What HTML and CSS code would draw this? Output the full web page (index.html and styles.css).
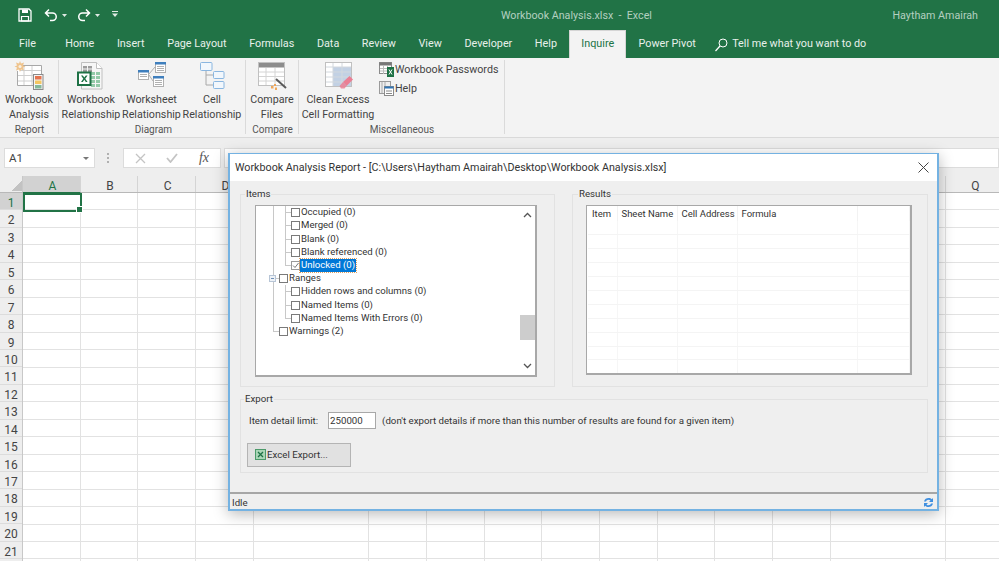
FILE: index.html
```html
<!DOCTYPE html>
<html lang="en">
<head>
<meta charset="utf-8">
<title>Workbook Analysis.xlsx - Excel</title>
<link rel="stylesheet" href="styles.css">
</head>
<body>
<div class="app">
  <header class="titlebar">
    <div class="qat">
      <svg class="qat-save" width="14" height="14" viewBox="0 0 14 14"><path d="M1 1h10l2 2v10H1z" fill="none" stroke="#fff" stroke-width="1.3"/><path d="M4 1.500h6v3.500H4z" fill="#fff"/><path d="M3.500 8.500h7V13h-7z" fill="none" stroke="#fff" stroke-width="1.2"/></svg>
      <svg class="qat-undo" width="14" height="14" viewBox="0 0 14 14"><path d="M5 1.500L1.500 5 5 8.500M2 5h6.500a3.700 3.700 0 0 1 0 7.500H6" fill="none" stroke="#fff" stroke-width="1.5"/></svg>
      <svg class="qat-caret" width="5" height="3" viewBox="0 0 5 3"><path d="M0 0h5L2.500 3z" fill="#dfe9e3"/></svg>
      <svg class="qat-redo" width="14" height="14" viewBox="0 0 14 14"><path d="M9 1.500L12.500 5 9 8.500M12 5H5.500a3.700 3.700 0 0 0 0 7.500H8" fill="none" stroke="#fff" stroke-width="1.5"/></svg>
      <svg class="qat-caret" width="5" height="3" viewBox="0 0 5 3"><path d="M0 0h5L2.500 3z" fill="#dfe9e3"/></svg>
      <svg class="qat-more" width="6" height="6" viewBox="0 0 6 6"><path d="M0 0h6v1H0zM0 2.500h6L3 6z" fill="#dfe9e3"/></svg>
    </div>
    <div class="doc-title">Workbook Analysis.xlsx&nbsp; -&nbsp; Excel</div>
    <div class="user">Haytham Amairah</div>
  </header>
  <nav class="tabs">
    <span class="tab tab-file">File</span>
    <span class="tab">Home</span>
    <span class="tab">Insert</span>
    <span class="tab">Page Layout</span>
    <span class="tab">Formulas</span>
    <span class="tab">Data</span>
    <span class="tab">Review</span>
    <span class="tab">View</span>
    <span class="tab">Developer</span>
    <span class="tab">Help</span>
    <span class="tab tab-active">Inquire</span>
    <span class="tab">Power Pivot</span>
    <span class="tellme">
      <svg width="13" height="14" viewBox="0 0 13 14"><circle cx="8" cy="5" r="4" fill="none" stroke="#fff" stroke-width="1"/><path d="M5 8l-4.500 5" stroke="#fff" stroke-width="1.200"/></svg>
      Tell me what you want to do
    </span>
  </nav>
  <section class="ribbon">
    <div class="group group-report">
      <div class="group-items">
        <div class="rbtn">
          <svg class="ricon" width="30" height="30" viewBox="0 0 30 30">
            <path d="M6 4.500h21.500v20H3.500V10" fill="#fff" stroke="#a8a8a8"/><path d="M4 14.500h23M4 20h23M10 5v19M18 5v19M6 9.500h21" stroke="#cfcfcf" fill="none"/>
            <path d="M6 0l1 2.500 3-1-1 3 2.500 1-2.500 1 1 3-3-1-1 2.500-1-2.500-3 1 1-3L.5 5.500l2.500-1-1-3 3 1z" fill="#efc48e"/><circle cx="6" cy="5.500" r="1.500" fill="#f7f0e4"/>
            <rect x="19.500" y="13.500" width="9.500" height="15" fill="#f4f4f4" stroke="#8a8a8a"/><rect x="21" y="15" width="6.500" height="3.500" fill="#e5744f"/><rect x="21" y="19.500" width="6.500" height="3.500" fill="#f4c660"/><rect x="21" y="24" width="6.500" height="3.500" fill="#84b899"/>
          </svg>
          <span class="rlabel">Workbook<br>Analysis</span>
        </div>
      </div>
      <div class="group-name">Report</div>
    </div>
    <div class="group group-diagram">
      <div class="group-items">
        <div class="rbtn rbtn-wide">
          <svg class="ricon" width="30" height="30" viewBox="0 0 30 30">
            <path d="M5.500 1.500h15l5.500 6v20.500H5.500z" fill="#f6f6f6" stroke="#c0c0c0"/><path d="M20.500 1.500v6H26" fill="#fff" stroke="#c0c0c0"/>
            <path d="M7 5h4v2.500H7zM12 5h4v2.500h-4zM7 8.500h4V11H7zM12 8.500h4V11h-4z" fill="#9c9c9c"/>
            <path d="M15 11h4v3h-4zM20 11h4v3h-4zM15 15h4v3h-4zM20 15h4v3h-4zM15 19h4v3h-4zM20 19h4v3h-4zM15 23h4v3h-4zM20 23h4v3h-4z" fill="#93caa8"/>
            <rect x="2" y="11.500" width="12.500" height="12.500" fill="#fff" stroke="#1e7145" stroke-width="2"/>
            <path d="M5 14.500l2.300 3.200L5 21h1.800l1.500-2.200L9.800 21h1.800l-2.300-3.300 2.300-3.200H9.800l-1.500 2.100-1.500-2.100z" fill="#1e7145"/>
          </svg>
          <span class="rlabel">Workbook<br>Relationship</span>
        </div>
        <div class="rbtn rbtn-wide">
          <svg class="ricon" width="30" height="30" viewBox="0 0 30 30">
            <path d="M12 13l6-7M12 14l4 6" stroke="#b0b0b0" fill="none"/>
            <rect x="1.500" y="9.500" width="10" height="9" fill="#fff" stroke="#b0b0b0"/><rect x="1" y="9" width="11" height="2.500" fill="#3f7fbd"/><path d="M3 13.500h7M3 15.500h7" stroke="#b0b0b0"/>
            <rect x="18.500" y="1.500" width="10" height="10" fill="#fff" stroke="#b0b0b0"/><rect x="18" y="1" width="11" height="2.500" fill="#3f7fbd"/><path d="M20 5.500h7M20 7.500h7M20 9.500h7" stroke="#b0b0b0"/>
            <rect x="16.500" y="15.500" width="10" height="10" fill="#fff" stroke="#b0b0b0"/><rect x="16" y="15" width="11" height="2.500" fill="#3f7fbd"/><path d="M18 19.500h7M18 21.500h7M18 23.500h7" stroke="#b0b0b0"/>
          </svg>
          <span class="rlabel">Worksheet<br>Relationship</span>
        </div>
        <div class="rbtn rbtn-wide">
          <svg class="ricon" width="30" height="30" viewBox="0 0 30 30">
            <path d="M9 9v15h7M9 14h7" fill="none" stroke="#a8a8a8"/>
            <rect x="3.500" y="1.500" width="11.500" height="8" rx="1" fill="#f2f7fc" stroke="#8ab6e0"/>
            <rect x="16.500" y="10.500" width="10.500" height="7" rx="1" fill="#f2f7fc" stroke="#8ab6e0"/>
            <rect x="16.500" y="20.500" width="10.500" height="7" rx="1" fill="#f2f7fc" stroke="#8ab6e0"/>
          </svg>
          <span class="rlabel">Cell<br>Relationship</span>
        </div>
      </div>
      <div class="group-name">Diagram</div>
    </div>
    <div class="group group-compare">
      <div class="group-items">
        <div class="rbtn">
          <svg class="ricon" width="30" height="30" viewBox="0 0 30 30">
            <rect x="1.500" y="1.500" width="26" height="23" fill="#fff" stroke="#c0c0c0"/><rect x="2" y="2" width="25" height="4.500" fill="#8c8c8c"/>
            <path d="M2 11h25M2 15.500h25M2 20h25M9 7v17M18 7v17" stroke="#d4d4d4"/>
            <path d="M19 18l10 9" stroke="#5a5a5a" stroke-width="2"/><path d="M17 23h2v2h-2zM14 25h2.500v2.500H14zM18 26.500h2V29h-2z" fill="#f0a75a"/>
          </svg>
          <span class="rlabel">Compare<br>Files</span>
        </div>
      </div>
      <div class="group-name">Compare</div>
    </div>
    <div class="group group-misc">
      <div class="group-items">
        <div class="rbtn rbtn-clean">
          <svg class="ricon" width="30" height="30" viewBox="0 0 30 30">
            <rect x="2.500" y="1.500" width="26" height="24" fill="#fff" stroke="#c0c0c0"/><rect x="10" y="6" width="18" height="19" fill="#c2d1e4"/>
            <path d="M3 6h25M3 11h25M3 16h25M3 21h25M10 2v23M19 2v23" stroke="#d2d8de"/>
            <path d="M20 21l6.500-6 3.500 3.500-6.500 6.500z" fill="#ea7f94"/><path d="M20 21l3.500 4-2 2.500H18L16.500 25z" fill="#ea7f94" opacity=".85"/>
          </svg>
          <span class="rlabel">Clean Excess<br>Cell Formatting</span>
        </div>
        <div class="rsmall-list">
          <div class="rsmall">
            <svg width="15" height="15" viewBox="0 0 15 15"><rect x=".5" y=".5" width="12" height="11" fill="#fff" stroke="#8a8a8a"/><rect x=".5" y=".5" width="12" height="3" fill="#777"/><path d="M1 6.500h11M1 9h11M4.500 4v8M8.500 4v8" stroke="#bbb"/><rect x="8" y="5" width="7" height="10" fill="#1e7145"/><path d="M10 7.500l3 5M13 7.500l-3 5" stroke="#fff"/></svg>
            <span>Workbook Passwords</span>
          </div>
          <div class="rsmall">
            <svg width="15" height="15" viewBox="0 0 15 15"><rect x=".5" y=".5" width="11" height="12" fill="#eee" stroke="#9a9a9a"/><path d="M3 1v11M6 1v5" stroke="#aaa"/><rect x="5.500" y="5.500" width="9" height="9" fill="#fff" stroke="#8a8a8a"/><rect x="5.500" y="5.500" width="9" height="2" fill="#2f75b5"/><path d="M7 10h6M7 12.500h6" stroke="#888"/></svg>
            <span>Help</span>
          </div>
        </div>
      </div>
      <div class="group-name">Miscellaneous</div>
    </div>
  </section>
  <section class="formula-bar">
    <div class="namebox"><span>A1</span><svg width="6" height="3" viewBox="0 0 6 3"><path d="M0 0h6L3 3z" fill="#777"/></svg></div>
    <div class="fb-dots"></div>
    <div class="fb-buttons">
      <svg width="11" height="11" viewBox="0 0 11 11"><path d="M1 1l9 9M10 1l-9 9" stroke="#c4c4c4" stroke-width="1.300"/></svg>
      <svg width="12" height="10" viewBox="0 0 12 10"><path d="M1 5l3.500 4L11 1" fill="none" stroke="#c4c4c4" stroke-width="1.800"/></svg>
      <span class="fx">fx</span>
    </div>
    <div class="fb-input"></div>
  </section>
  <section class="sheet">
    <div class="col-heads">
      <div class="corner"></div>
      <span class="col col-on">A</span><span class="col">B</span><span class="col">C</span><span class="col">D</span><span class="col">E</span><span class="col">F</span><span class="col">G</span><span class="col">H</span><span class="col">I</span><span class="col">J</span><span class="col">K</span><span class="col">L</span><span class="col">M</span><span class="col">N</span><span class="col">O</span><span class="col">P</span><span class="col">Q</span>
    </div>
    <div class="sheet-body">
      <div class="row-heads">
        <span class="rowh rowh-on">1</span><span class="rowh">2</span><span class="rowh">3</span><span class="rowh">4</span><span class="rowh">5</span><span class="rowh">6</span><span class="rowh">7</span><span class="rowh">8</span><span class="rowh">9</span><span class="rowh">10</span><span class="rowh">11</span><span class="rowh">12</span><span class="rowh">13</span><span class="rowh">14</span><span class="rowh">15</span><span class="rowh">16</span><span class="rowh">17</span><span class="rowh">18</span><span class="rowh">19</span><span class="rowh">20</span><span class="rowh">21</span>
      </div>
      <div class="cells"><div class="active-cell"></div></div>
    </div>
  </section>
</div>

<div class="dialog">
  <div class="dlg-title">
    <span>Workbook Analysis Report - [C:\Users\Haytham Amairah\Desktop\Workbook Analysis.xlsx]</span>
    <svg width="11" height="11" viewBox="0 0 11 11"><path d="M.5.500l10 10M10.500.500l-10 10" stroke="#444" stroke-width="1"/></svg>
  </div>
  <div class="dlg-main">
    <div class="dlg-panels">
      <fieldset class="panel panel-items">
        <legend>Items</legend>
        <div class="tree">
          <div class="tree-rows">
            <div class="node n2 line"><i class="cb"></i><span>Occupied (0)</span></div>
            <div class="node n2 line"><i class="cb"></i><span>Merged (0)</span></div>
            <div class="node n2 line"><i class="cb"></i><span>Blank (0)</span></div>
            <div class="node n2 line"><i class="cb"></i><span>Blank referenced (0)</span></div>
            <div class="node n2 line-end"><i class="cb cb-on"><svg width="7" height="7" viewBox="0 0 7 7"><path d="M1 3.500l2 2L6.500 1" fill="none" stroke="#777" stroke-width="1"/></svg></i><span class="sel">Unlocked (0)</span></div>
            <div class="node n1 branch"><i class="minus"></i><i class="cb"></i><span>Ranges</span></div>
            <div class="node n2 line"><i class="cb"></i><span>Hidden rows and columns (0)</span></div>
            <div class="node n2 line"><i class="cb"></i><span>Named Items (0)</span></div>
            <div class="node n2 line-end"><i class="cb"></i><span>Named Items With Errors (0)</span></div>
            <div class="node n1 last"><i class="cb"></i><span>Warnings (2)</span></div>
          </div>
          <div class="vscroll">
            <svg width="9" height="6" viewBox="0 0 9 6"><path d="M1 5l3.500-3.500L8 5" fill="none" stroke="#555" stroke-width="1.300"/></svg>
            <div class="vtrack"><div class="vthumb"></div></div>
            <svg width="9" height="6" viewBox="0 0 9 6"><path d="M1 1l3.500 3.500L8 1" fill="none" stroke="#555" stroke-width="1.300"/></svg>
          </div>
        </div>
      </fieldset>
      <fieldset class="panel panel-results">
        <legend>Results</legend>
        <div class="results">
          <table>
            <thead><tr><th class="c1">Item</th><th class="c2">Sheet Name</th><th class="c3">Cell Address</th><th class="c4">Formula</th><th></th></tr></thead>
            <tbody>
              <tr><td></td><td></td><td></td><td></td><td></td></tr>
              <tr><td></td><td></td><td></td><td></td><td></td></tr>
              <tr><td></td><td></td><td></td><td></td><td></td></tr>
              <tr><td></td><td></td><td></td><td></td><td></td></tr>
              <tr><td></td><td></td><td></td><td></td><td></td></tr>
              <tr><td></td><td></td><td></td><td></td><td></td></tr>
              <tr><td></td><td></td><td></td><td></td><td></td></tr>
              <tr><td></td><td></td><td></td><td></td><td></td></tr>
              <tr><td></td><td></td><td></td><td></td><td></td></tr>
              <tr><td></td><td></td><td></td><td></td><td></td></tr>
              <tr><td></td><td></td><td></td><td></td><td></td></tr>
            </tbody>
          </table>
        </div>
      </fieldset>
    </div>
    <fieldset class="panel panel-export">
      <legend>Export</legend>
      <div class="export-row">
        <label for="limit">Item detail limit:</label>
        <input id="limit" type="text" value="250000">
        <span>(don't export details if more than this number of results are found for a given item)</span>
      </div>
      <button type="button" class="export-btn">
        <svg width="11" height="11" viewBox="0 0 11 11"><rect x=".5" y=".5" width="10" height="10" fill="#a9d5b6" stroke="#4c9a6a"/><path d="M3 3l5 5M8 3l-5 5" stroke="#1e7145" stroke-width="1.300"/></svg>
        <span>Excel Export...</span>
      </button>
    </fieldset>
  </div>
  <div class="dlg-status">
    <span>Idle</span>
    <svg width="11" height="11" viewBox="0 0 11 11"><path d="M1 4.500C1.500 2 3.500 1 5.500 1c1.500 0 2.500.5 3.300 1.300L10 1v4H6l1.500-1.400C7 3 6.300 2.800 5.500 2.800 4.300 2.800 3.300 3.500 3 4.500z" fill="#3f8fe0"/><path d="M10 6.500C9.500 9 7.500 10 5.500 10c-1.500 0-2.500-.5-3.300-1.300L1 10V6h4L3.500 7.400c.5.600 1.200.8 2 .8 1.200 0 2.200-.7 2.500-1.700z" fill="#3f8fe0"/></svg>
  </div>
</div>
</body>
</html>
```
FILE: styles.css
```css
* { box-sizing: border-box; }
html, body { margin: 0; height: 100%; overflow: hidden; }
body { font-family: Roboto, "Noto Sans", sans-serif; background: #fff; color: #444; width: 999px; height: 561px; position: relative; }
.app { width: 999px; height: 561px; display: flex; flex-direction: column; overflow: hidden; }

/* title bar */
.titlebar { height: 30px; background: #217346; display: flex; align-items: center; color: #b4d0c0; font-size: 10.700px; flex: none; }
.qat { display: flex; align-items: center; padding-left: 18px; }
.qat-undo { margin-left: 12px; }
.qat-caret { margin-left: 4px; }
.qat-redo { margin-left: 10px; }
.qat-more { margin-left: 12px; margin-top: -2px; }
.doc-title { margin-left: 383px; width: 150px; white-space: nowrap; }
.user { margin-left: auto; margin-right: 21px; white-space: nowrap; }

/* tabs */
.tabs { height: 28px; background: #217346; display: flex; align-items: flex-end; padding-left: 8px; flex: none; font-size: 10.800px; color: #e8f0eb; }
.tab { height: 28px; padding: 7px 11.300px 0; white-space: nowrap; }
.tab-file { padding-right: 18px; padding-left: 11px; }
.tab-active { background: #f3f3f3; color: #217346; border: 1px solid #d5d5d5; border-bottom: 0; margin: 0 1px; padding: 6px 11px 0; }
.tellme { display: flex; align-items: flex-start; gap: 4px; height: 28px; padding-top: 7px; margin-left: 8px; white-space: nowrap; }
.tellme svg { margin-top: 1px; }

/* ribbon */
.ribbon { height: 80px; background: #f3f3f3; display: flex; border-bottom: 1px solid #d9d9d9; padding-top: 2px; flex: none; font-size: 10.700px; color: #444; }
.group { display: flex; flex-direction: column; height: 77px; background: linear-gradient(#dadada,#dadada) right top / 1px 74px no-repeat; }
.group-report { width: 59px; }
.group-diagram { width: 187px; padding-left: 1.750px; }
.group-compare { width: 53px; }
.group-misc { width: 206px; }
.group-items { flex: 1; display: flex; min-height: 0; }
.group-name { height: 14px; line-height: 14px; text-align: center; font-size: 10px; color: #555; }
.rbtn { display: flex; flex-direction: column; align-items: center; width: 58px; flex: none; text-align: center; }
.group-compare .rbtn { width: 52px; }
.rbtn-wide { width: 60.500px; }
.rbtn-clean { width: 78px; }
.ricon { flex: none; margin-top: 1px; }
.rlabel { margin-top: 1px; line-height: 15px; white-space: nowrap; }
.rsmall-list { display: flex; flex-direction: column; margin-left: 2px; }
.rsmall { display: flex; align-items: center; gap: 1px; height: 19px; white-space: nowrap; }

/* formula bar */
.formula-bar { height: 38px; background: #eeeeee; display: flex; align-items: center; padding: 2px 0 0 4px; flex: none; }
.namebox { width: 91px; height: 20px; background: #fff; border: 1px solid #dcdcdc; display: flex; align-items: center; justify-content: space-between; padding: 0 5px 0 4px; font-size: 11.500px; color: #444; }
.fb-dots { width: 2px; height: 11px; margin: 0 14px 0 12px; background: repeating-linear-gradient(#b0b0b0 0 2px, transparent 2px 4px); }
.fb-buttons { width: 98px; height: 20px; background: #fff; border: 1px solid #dcdcdc; display: flex; align-items: center; justify-content: space-between; padding: 0 11px; }
.fx { font-family: "Liberation Serif", serif; font-style: italic; font-size: 14px; color: #555; font-weight: 400; }
.fb-input { flex: 1; height: 20px; margin-left: 3px; background: #fff; border: 1px solid #dcdcdc; }

/* sheet */
.sheet { flex: 1; display: flex; flex-direction: column; background: #fff; min-height: 0; }
.col-heads { height: 17px; background: #eeeeee; display: flex; flex: none; border-bottom: 1px solid #b8b8b8; }
.corner { width: 23px; flex: none; border-right: 1px solid #c8c8c8; background: linear-gradient(135deg, transparent 0 58%, #c2c2c2 58%) 8px 3px / 14px 12px no-repeat; }
.col { width: 57.700px; flex: none; text-align: center; font-size: 12px; line-height: 20px; padding-left: 2px; color: #444; border-right: 1px solid #d4d4d4; }
.col-on { background: #d2d2d2; color: #217346; border-bottom: 1px solid #217346; height: 17px; }
.sheet-body { flex: 1; display: flex; min-height: 0; }
.row-heads { width: 23px; flex: none; background: #eeeeee; border-right: 1px solid #c8c8c8; display: flex; flex-direction: column; }
.rowh { height: 17.450px; flex: none; text-align: center; font-size: 12px; line-height: 20px; color: #444; border-bottom: 1px solid #dcdcdc; }
.rowh-on { background: #d2d2d2; color: #217346; }
.cells { flex: 1; background:
  repeating-linear-gradient(90deg, transparent 0 56.700px, #e2e2e2 56.700px 57.700px),
  repeating-linear-gradient(180deg, transparent 0 16.450px, #e2e2e2 16.450px 17.450px); }
.active-cell { width: 59px; height: 18.500px; border: 2px solid #217346; position: relative; }
.active-cell::after { content: ""; position: absolute; right: -3px; bottom: -3px; width: 5px; height: 5px; background: #217346; border: 1px solid #fff; }

/* dialog */
.dialog { position: absolute; left: 228px; top: 153px; width: 711px; height: 358px; background: #efefef; border: 2px solid #74b2e2; border-top-width: 1px; display: flex; flex-direction: column; box-shadow: 0 3px 14px rgba(0,0,0,.28); font-family: Roboto, sans-serif; font-size: 9.700px; color: #333; }
.dlg-title { height: 27px; flex: none; background: #fff; display: flex; align-items: center; justify-content: space-between; padding: 0 8px 0 5px; font-size: 10.730px; color: #333; }
.dlg-main { flex: 1; display: flex; flex-direction: column; padding: 7px 9px 0 10px; min-height: 0; }
.dlg-panels { display: flex; gap: 17px; }
.panel { margin: 0; border: 1px solid #e2e2e2; min-width: 0; }
.panel legend { padding: 0 1px 1px; line-height: 12px; color: #333; }
.panel-items { width: 315px; height: 199px; padding: 4px 0 0 14px; }
.panel-items legend { margin-left: -10px; }
.panel-results { width: 356px; height: 199px; padding: 4px 0 0 13px; }
.panel-results legend { margin-left: -8px; }
.panel-export { height: 80px; margin-top: 6px; padding: 0 0 0 6px; }
.panel-export legend { margin-left: -3px; }

.tree { width: 282px; height: 172px; background: #fff; border: 1px solid #a8a8a8; border-right-width: 2px; border-bottom-width: 2px; display: flex; }
.tree-rows { flex: 1; font-size: 9.600px; }
.node { height: 13.220px; display: flex; align-items: center; white-space: nowrap; color: #333; background-repeat: no-repeat; }
.node span { padding: 0 1px 1px; line-height: 12px; }
.n2 { padding-left: 35px; }
.n1 { padding-left: 23px; }
.line { background-image: linear-gradient(#c8c8c8,#c8c8c8), linear-gradient(#c8c8c8,#c8c8c8), linear-gradient(#c8c8c8,#c8c8c8); background-size: 1px 100%, 1px 100%, 6px 1px; background-position: 17px 0, 29px 0, 29px 50%; }
.line-end { background-image: linear-gradient(#c8c8c8,#c8c8c8), linear-gradient(#c8c8c8,#c8c8c8), linear-gradient(#c8c8c8,#c8c8c8); background-size: 1px 100%, 1px 50%, 6px 1px; background-position: 17px 0, 29px 0, 29px 50%; }
.branch { background-image: linear-gradient(#c8c8c8,#c8c8c8), linear-gradient(#c8c8c8,#c8c8c8); background-size: 1px 100%, 6px 1px; background-position: 17px 0, 17px 50%; }
.last { background-image: linear-gradient(#c8c8c8,#c8c8c8), linear-gradient(#c8c8c8,#c8c8c8); background-size: 1px 50%, 6px 1px; background-position: 17px 0, 17px 50%; }
.cb { width: 9px; height: 9px; flex: none; background: #fff; border: 1px solid #7a7a7a; display: flex; align-items: center; justify-content: center; }
.cb svg { display: block; }
.cb-on { border-color: #9a9a9a; }
.minus { width: 5px; height: 5px; flex: none; margin-left: -9px; margin-right: 4px; background: linear-gradient(#6f8fb5,#6f8fb5) center / 3px 1px no-repeat #eef2f7; outline: 1px solid #b7c5d6; }
.sel { background: #0078d7; color: #fff; outline: 1px dotted #e0a060; }
.vscroll { width: 15px; flex: none; display: flex; flex-direction: column; align-items: center; padding: 6px 0; background: #fff; }
.vtrack { flex: 1; width: 100%; padding-top: 97px; }
.vthumb { height: 25px; background: #cdcdcd; }

.results { width: 326px; height: 170px; background: #fff; border: 1px solid #a8a8a8; border-right-width: 2px; border-bottom-width: 2px; padding: 0 1px; overflow: hidden; }
.results table { border-collapse: collapse; table-layout: fixed; width: 322px; color: #333; font-size: 9.500px; }
.results th { height: 15px; font-weight: 400; text-align: left; padding: 0 0 1px 4px; border-right: 1px solid #f2f2f2; white-space: nowrap; }
.results .c1 { width: 29px; }
.results .c2 { width: 60px; }
.results .c3 { width: 60px; }
.results .c4 { width: 120px; }
.results td { height: 13.900px; padding: 0; border-right: 1px solid #f6f6f6; border-bottom: 1px solid #f4f4f4; }

.export-row { display: flex; align-items: center; height: 17px; margin-top: 6px; color: #333; white-space: nowrap; padding-left: 2px; }
.export-row input { width: 48px; height: 17px; margin: 0 6px 0 10px; padding: 0 1px; border: 1px solid #a8a8a8; background: #fff; font: inherit; color: #333; }
.export-btn { display: flex; align-items: center; gap: 1px; width: 104px; height: 24px; margin-top: 14px; padding: 0 0 1px 7px; background: #e1e1e1; border: 1px solid #b4b4b4; font: inherit; color: #333; }

.dlg-status { height: 17px; flex: none; border-top: 2px solid #a6a6a6; display: flex; align-items: center; justify-content: space-between; padding: 2px 3px 0 2px; color: #333; }
```
